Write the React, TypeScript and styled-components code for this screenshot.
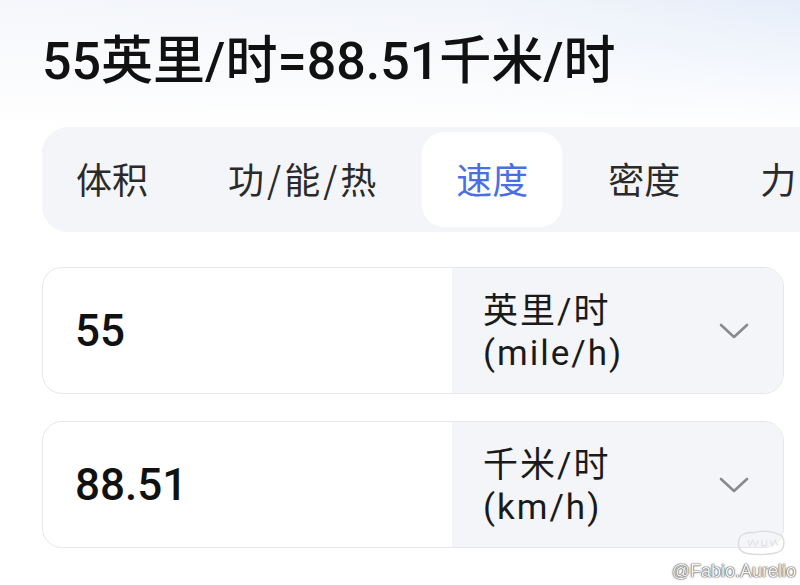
import { FunctionComponent } from "react";
import styled, { createGlobalStyle } from "styled-components";

const GlobalStyle = createGlobalStyle`
  html, body {
    margin: 0;
    padding: 0;
    background: #ffffff;
  }
  body {
    font-family: Roboto, "Noto Sans CJK SC", sans-serif;
    color: #111;
  }
`;

const CATEGORIES = ["体积", "功/能/热", "速度", "密度", "力"];

const ROWS = [
  { value: "55", unit: "英里/时", code: "(mile/h)" },
  { value: "88.51", unit: "千米/时", code: "(km/h)" },
];

const Chevron = () => (
  <svg width="30" height="16" viewBox="0 0 30 16" fill="none">
    <path
      d="M2 2 L15 14 L28 2"
      stroke="#8a8a8a"
      strokeWidth="2.6"
      strokeLinecap="round"
      strokeLinejoin="round"
    />
  </svg>
);

// the slashes in the tab names sit a little wider than the font's own
const TabName = ({ name }: { name: string }) => {
  const parts = name.split("/");
  return (
    <>
      {parts.map((p, i) => (
        <span key={i}>
          {i > 0 && <Slash>/</Slash>}
          {p}
        </span>
      ))}
    </>
  );
};

const App: FunctionComponent = () => {
  return (
    <Page>
      <GlobalStyle />
      <Title>55英里/时=88.51千米/时</Title>
      <TabBar>
        {CATEGORIES.map((name) => (
          <Tab key={name} $active={name === "速度"}>
            <TabName name={name} />
          </Tab>
        ))}
      </TabBar>
      <Rows>
        {ROWS.map((row) => (
          <Card key={row.value}>
            <Value>{row.value}</Value>
            <UnitBox>
              <UnitLabel>
                <span>{row.unit}</span>
                <span>{row.code}</span>
              </UnitLabel>
              <Chevron />
            </UnitBox>
          </Card>
        ))}
      </Rows>
      <Watermark>
        <Badge viewBox="0 0 56 30">
          <path
            d="M4 14 C4 6 12 3 20 4 C28 1 40 2 48 6 C54 9 54 20 48 24 C40 28 22 28 12 26 C5 24 3 20 4 14 Z"
            fill="none"
            stroke="#dcdcdc"
            strokeWidth="1.5"
          />
          <path
            d="M14 12 L16 18 L19 12 L22 18 L25 12 M29 12 L29 18 L34 18 L34 12 M38 12 L40 18 L43 12 L46 18"
            fill="none"
            stroke="#e4e4e4"
            strokeWidth="1.5"
          />
        </Badge>
        <Handle>@Fabio.Aurelio</Handle>
      </Watermark>
    </Page>
  );
};

const Page = styled.div`
  position: relative;
  width: 800px;
  height: 585px;
  overflow: hidden;
  box-sizing: border-box;
  padding: 32px 0 0 42px;
  background: linear-gradient(
      180deg,
      rgba(255, 255, 255, 0) 0px,
      #ffffff 130px
    ),
    linear-gradient(90deg, #f5f7fb 0%, #f2f5fa 60%, #e6eefa 100%);
`;

const Title = styled.h1`
  margin: 0;
  font-size: 52px;
  line-height: 60px;
  font-weight: 500;
  color: #111;
  white-space: nowrap;
`;

const TabBar = styled.div`
  margin-top: 35px;
  display: flex;
  gap: 12px;
  padding: 5px 0;
  width: 820px;
  height: 105px;
  box-sizing: border-box;
  background: #f4f5f8;
  border-radius: 26px 0 0 26px;
  overflow: hidden;
`;

const Tab = styled.div<{ $active?: boolean }>`
  flex: none;
  display: flex;
  align-items: center;
  padding: 0 34px 4px;
  border-radius: 22px;
  font-size: 36px;
  font-family: "Noto Sans CJK SC", sans-serif;
  color: ${(p) => (p.$active ? "#4b6fe2" : "#2a2a2a")};
  background: ${(p) => (p.$active ? "#ffffff" : "transparent")};
  white-space: nowrap;
`;

const Slash = styled.span`
  margin: 0 3px;
`;

const Rows = styled.div`
  margin-top: 35px;
  display: flex;
  flex-direction: column;
  gap: 27px;
  width: 742px;
`;

const Card = styled.div`
  display: grid;
  grid-template-columns: 409px 1fr;
  height: 127px;
  box-sizing: border-box;
  border: 1.5px solid #e6e7ea;
  border-radius: 20px;
  overflow: hidden;
  background: #ffffff;
`;

const Value = styled.div`
  display: flex;
  align-items: center;
  padding-left: 32px;
  font-size: 44px;
  font-weight: 500;
  color: #111;
`;

const UnitBox = styled.div`
  display: flex;
  align-items: center;
  justify-content: space-between;
  padding: 0 34px 0 31px;
  background: #f4f5f8;
`;

const UnitLabel = styled.div`
  display: flex;
  flex-direction: column;
  margin-top: 4px;
  font-size: 35px;
  line-height: 42px;
  letter-spacing: 2px;
  color: #1a1a1a;
`;

const Watermark = styled.div`
  position: absolute;
  right: 4px;
  bottom: 3px;
  display: flex;
  flex-direction: column;
  align-items: flex-end;
`;

const Badge = styled.svg`
  width: 54px;
  height: 28px;
  margin-right: 8px;
  margin-bottom: 4px;
`;

const Handle = styled.span`
  font-family: "Liberation Sans", sans-serif;
  font-size: 18px;
  color: #f4f4f4;
  text-shadow: 0 0 1px #555, 0 0 1px #555, 0 0 2px #777;
`;

export default App;
